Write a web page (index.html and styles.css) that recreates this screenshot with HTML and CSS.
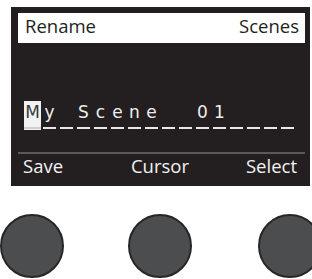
FILE: index.html
```html
<!DOCTYPE html>
<html>
<head>
<meta charset="utf-8">
<link rel="stylesheet" href="styles.css">
</head>
<body>
<div class="screen">
  <div class="header"><span>Rename</span><span>Scenes</span></div>
  <div class="field">
    <div class="cell cursor"><span class="ch">M</span><span class="dash"></span></div>
    <div class="cell"><span class="ch">y</span><span class="dash"></span></div>
    <div class="cell"><span class="ch"></span><span class="dash"></span></div>
    <div class="cell"><span class="ch">S</span><span class="dash"></span></div>
    <div class="cell"><span class="ch">c</span><span class="dash"></span></div>
    <div class="cell"><span class="ch">e</span><span class="dash"></span></div>
    <div class="cell"><span class="ch">n</span><span class="dash"></span></div>
    <div class="cell"><span class="ch">e</span><span class="dash"></span></div>
    <div class="cell"><span class="ch"></span><span class="dash"></span></div>
    <div class="cell"><span class="ch"></span><span class="dash"></span></div>
    <div class="cell"><span class="ch">0</span><span class="dash"></span></div>
    <div class="cell"><span class="ch">1</span><span class="dash"></span></div>
    <div class="cell"><span class="ch"></span><span class="dash"></span></div>
    <div class="cell"><span class="ch"></span><span class="dash"></span></div>
    <div class="cell"><span class="ch"></span><span class="dash"></span></div>
    <div class="cell"><span class="ch"></span><span class="dash"></span></div>
  </div>
  <div class="sep"></div>
  <div class="labels"><span class="l">Save</span><span class="c">Cursor</span><span class="r">Select</span></div>
</div>
<div class="buttons">
  <div class="slot"><div class="knob"></div></div>
  <div class="slot"><div class="knob"></div></div>
  <div class="slot last"><div class="knob"></div></div>
</div>
</body>
</html>
```
FILE: styles.css
```css
html, body {
  margin: 0;
  padding: 0;
  background: #ffffff;
  overflow: hidden;
}
body {
  width: 312px;
  height: 279px;
  font-family: "Open Sans", "Liberation Sans", sans-serif;
}
.screen {
  box-sizing: border-box;
  margin: 7px 0 0 11px;
  width: 299px;
  height: 179px;
  background: #231f20;
  padding: 6px 5px 0 7px;
  display: flex;
  flex-direction: column;
}
.header {
  box-sizing: border-box;
  height: 30px;
  background: #ffffff;
  color: #231f20;
  font-size: 18.5px;
  line-height: 24px;
  padding: 1px 6px 0 7px;
  display: flex;
  justify-content: space-between;
  align-items: flex-start;
}
.field {
  margin: 58px 0 0 6px;
  height: 29px;
  display: flex;
}
.cell {
  width: 17px;
  height: 29px;
  display: flex;
  flex-direction: column;
  align-items: center;
}
.ch {
  height: 20px;
  margin-top: 1px;
  line-height: 20px;
  font-family: "DejaVu Sans", "Open Sans", sans-serif;
  font-size: 17px;
  color: #eeeeee;
}
.dash {
  width: 13px;
  height: 2px;
  margin-top: 5px;
  background: #e8e8e8;
}
.cursor {
  background: #f2f2f2;
}
.cursor .ch {
  color: #3a3a3a;
}
.cursor .dash {
  width: 17px;
  background: #cfcfcf;
}
.sep {
  margin-top: 22px;
  height: 2px;
  background: #5a5858;
}
.labels {
  height: 24px;
  line-height: 24px;
  font-size: 18.5px;
  color: #f2f2f2;
  padding: 0 8px 0 5px;
  display: grid;
  grid-template-columns: 1fr auto 1fr;
}
.labels .l {
  justify-self: start;
}
.labels .r {
  justify-self: end;
}
.buttons {
  margin-top: 28px;
  width: 312px;
  display: flex;
  gap: 64px;
  overflow: hidden;
}
.slot {
  flex: none;
  width: 64px;
  height: 64px;
}
.slot.last {
  width: 56px;
  margin-left: 2px;
  overflow: hidden;
}
.knob {
  box-sizing: border-box;
  width: 64px;
  height: 64px;
  border-radius: 50%;
  background: #4c4d4f;
  border: 2px solid #262626;
}
```
